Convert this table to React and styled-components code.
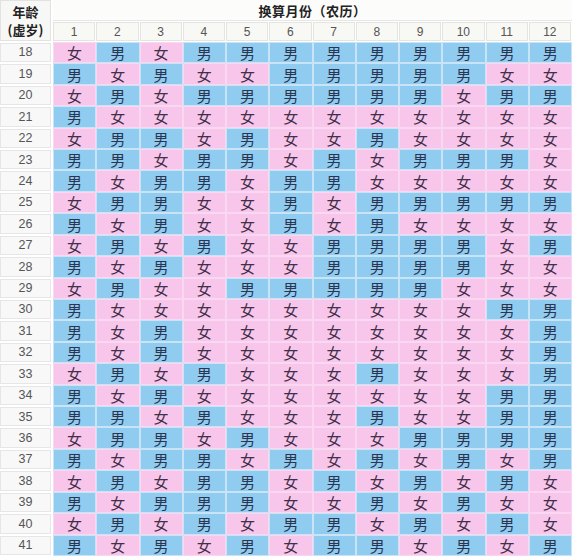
import React from "react";
import styled, { createGlobalStyle } from "styled-components";

const GlobalStyle = createGlobalStyle`
  html, body {
    margin: 0;
    padding: 0;
    background: #ffffff;
  }
  body {
    font-family: "Noto Sans CJK SC", "Noto Sans", sans-serif;
  }
`;

const ROWS = [
  [18, "女男女男男男男男男男男男"],
  [19, "男女男女女男男男男男女女"],
  [20, "女男女男男男男男男女男男"],
  [21, "男女女女女女女女女女女女"],
  [22, "女男男女男女女男女女女女"],
  [23, "男男女男男女男女男男男女"],
  [24, "男女男男女男男女女女女女"],
  [25, "女男男女女男女男男男男男"],
  [26, "男女男女女男女男女女女女"],
  [27, "女男女男女女男男男男女男"],
  [28, "男女男女女女男男男男女女"],
  [29, "女男女女男男男男男女女女"],
  [30, "男女女女女女女女女女男男"],
  [31, "男女男女女女女女女女女男"],
  [32, "男女男女女女女女女女女男"],
  [33, "女男女男女女女男女女女男"],
  [34, "男女男女女女女女女女男男"],
  [35, "男男女男女女女男女女男男"],
  [36, "女男男女男女女女男男男男"],
  [37, "男女男男女男女男女男女男"],
  [38, "女男女男男女男女男女男女"],
  [39, "男女男男男女女男女男女女"],
  [40, "女男女男女男男女男女男女"],
  [41, "男女男女男女男男女男女男"],
];

const Table = styled.div`
  display: grid;
  grid-template-columns: 53px repeat(12, minmax(0, 1fr));
  grid-template-rows: 21px 21px repeat(24, minmax(0, 1fr));
  width: 572px;
  height: 556px;
  overflow: hidden;
  background: #ffffff;
  box-sizing: border-box;
`;

const AgeHead = styled.div`
  grid-row: 1 / span 2;
  grid-column: 1;
  display: flex;
  flex-direction: column;
  align-items: center;
  justify-content: center;
  background: #f7f7f6;
  border: 1px solid #e2e2e2;
  box-sizing: border-box;
  margin: 0 2px 1px 0;
  font-weight: 700;
  font-size: 13px;
  line-height: 18px;
  color: #222;
`;

const MonthTitle = styled.div`
  grid-row: 1;
  grid-column: 2 / span 12;
  display: flex;
  align-items: center;
  justify-content: center;
  background: #fcfcfb;
  border-bottom: 1px solid #e6e6e6;
  font-weight: 700;
  font-size: 13px;
  line-height: 1;
  color: #222;
  letter-spacing: 0.5px;
`;

const MonthNum = styled.div`
  display: flex;
  align-items: center;
  justify-content: center;
  min-height: 0;
  background: #f8f8f4;
  border: 1px solid #e4e4e0;
  margin: 1px 1px 1px 0;
  font-family: "Liberation Sans", Arial, sans-serif;
  font-size: 12px;
  line-height: 1;
  color: #555;
`;

const AgeCell = styled.div`
  display: flex;
  align-items: center;
  justify-content: center;
  min-height: 0;
  background: #f8f8f8;
  border: 1px solid #e6e6e6;
  margin: 1px 2px 1px 0;
  font-family: "Liberation Sans", Arial, sans-serif;
  font-size: 12.5px;
  line-height: 1;
  color: #555;
`;

const Cell = styled.div`
  display: flex;
  align-items: center;
  justify-content: center;
  min-height: 0;
  background: ${(p) => (p.$boy ? "#90cbf0" : "#f9c6eb")};
  border: 1px solid ${(p) => (p.$boy ? "#c8e4f6" : "#fbd8f1")};
  font-size: 15px;
  line-height: 1;
  color: ${(p) => (p.$boy ? "#2b3550" : "#40304a")};
`;

export default function App() {
  return (
    <>
      <GlobalStyle />
      <Table>
        <AgeHead>
          <span>年龄</span>
          <span>(虚岁)</span>
        </AgeHead>
        <MonthTitle>换算月份（农历）</MonthTitle>
        {Array.from({ length: 12 }, (_, i) => (
          <MonthNum key={i}>{i + 1}</MonthNum>
        ))}
        {ROWS.map(([age, cells]) => (
          <React.Fragment key={age}>
            <AgeCell>{age}</AgeCell>
            {[...cells].map((c, i) => (
              <Cell key={i} $boy={c === "男"}>
                {c}
              </Cell>
            ))}
          </React.Fragment>
        ))}
      </Table>
    </>
  );
}
